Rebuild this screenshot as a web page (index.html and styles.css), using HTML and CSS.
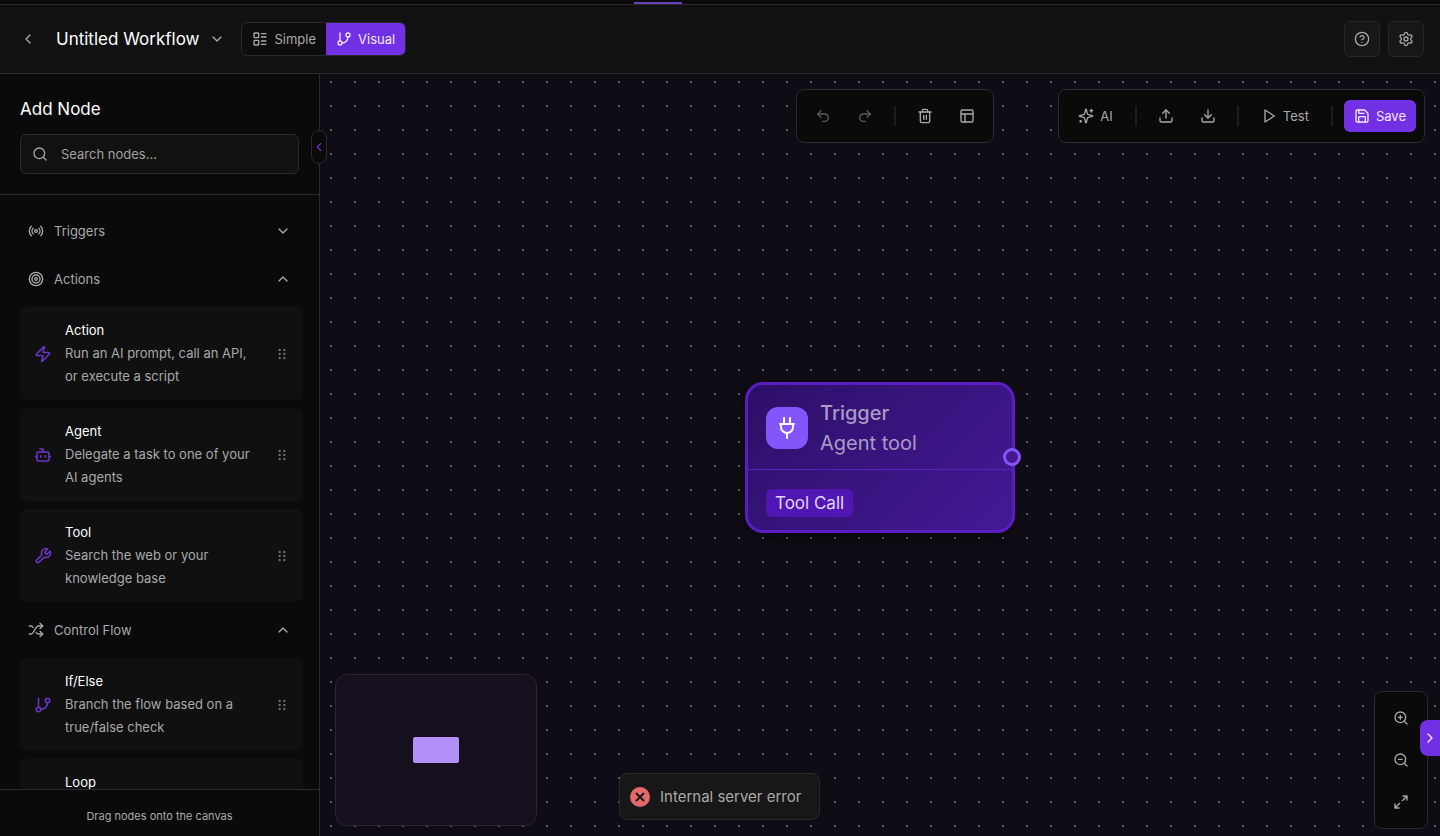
FILE: index.html
```html
<!DOCTYPE html>
<html lang="en">
<head>
  <meta charset="UTF-8" />
  <meta name="viewport" content="width=device-width, initial-scale=1.0"/>
  <title>Untitled Workflow</title>
  <link rel="stylesheet" href="styles.css">
</head>
<body>
  <div class="top-strip"><span class="tab-indicator"></span></div>

  <header class="header">
    <button class="back-btn" aria-label="Back">
      <svg class="icon" viewBox="0 0 24 24"><path d="m15 18-6-6 6-6"/></svg>
    </button>
    <button class="title-btn">
      <span class="title">Untitled Workflow</span>
      <svg class="icon" viewBox="0 0 24 24"><path d="m6 9 6 6 6-6"/></svg>
    </button>
    <div class="view-toggle">
      <button class="view-btn">
        <svg class="icon" viewBox="0 0 24 24"><rect width="7" height="7" x="3" y="3" rx="1"/><rect width="7" height="7" x="3" y="14" rx="1"/><path d="M14 4h7M14 9h7M14 15h7M14 20h7"/></svg>
        Simple
      </button>
      <button class="view-btn active">
        <svg class="icon" viewBox="0 0 24 24"><path d="M6 3v12"/><circle cx="18" cy="6" r="3"/><circle cx="6" cy="18" r="3"/><path d="M18 9a9 9 0 0 1-9 9"/></svg>
        Visual
      </button>
    </div>
    <div class="header-actions">
      <button class="square-btn" aria-label="Help">
        <svg class="icon" viewBox="0 0 24 24"><circle cx="12" cy="12" r="10"/><path d="M9.09 9a3 3 0 0 1 5.83 1c0 2-3 3-3 3"/><path d="M12 17h.01"/></svg>
      </button>
      <button class="square-btn" aria-label="Settings">
        <svg class="icon" viewBox="0 0 24 24"><path d="M9.671 4.136a2.34 2.34 0 0 1 4.659 0 2.34 2.34 0 0 0 3.319 1.915 2.34 2.34 0 0 1 2.33 4.033 2.34 2.34 0 0 0 0 3.831 2.34 2.34 0 0 1-2.33 4.033 2.34 2.34 0 0 0-3.319 1.915 2.34 2.34 0 0 1-4.659 0 2.34 2.34 0 0 0-3.32-1.915 2.34 2.34 0 0 1-2.33-4.033 2.34 2.34 0 0 0 0-3.831A2.34 2.34 0 0 1 6.35 6.051a2.34 2.34 0 0 0 3.319-1.915"/><circle cx="12" cy="12" r="3"/></svg>
      </button>
    </div>
  </header>

  <main class="main">
    <aside class="sidebar">
      <div class="sidebar-head">
        <h2>Add Node</h2>
        <label class="search">
          <svg class="icon" viewBox="0 0 24 24"><circle cx="11" cy="11" r="8"/><path d="m21 21-4.3-4.3"/></svg>
          <input type="text" placeholder="Search nodes..." aria-label="Search nodes" />
        </label>
      </div>

      <div class="node-list">
        <button class="category">
          <svg class="icon" viewBox="0 0 24 24"><path d="M4.9 19.1C1 15.2 1 8.8 4.9 4.9"/><path d="M7.8 16.2c-2.3-2.3-2.3-6.1 0-8.5"/><circle cx="12" cy="12" r="2"/><path d="M16.2 7.8c2.3 2.3 2.3 6.1 0 8.5"/><path d="M19.1 4.9C23 8.8 23 15.1 19.1 19"/></svg>
          <span>Triggers</span>
          <svg class="icon" viewBox="0 0 24 24"><path d="m6 9 6 6 6-6"/></svg>
        </button>
        <button class="category">
          <svg class="icon" viewBox="0 0 24 24"><circle cx="12" cy="12" r="10"/><circle cx="12" cy="12" r="6"/><circle cx="12" cy="12" r="2"/></svg>
          <span>Actions</span>
          <svg class="icon" viewBox="0 0 24 24"><path d="m18 15-6-6-6 6"/></svg>
        </button>

        <div class="card" draggable="true">
          <svg class="icon card-icon" viewBox="0 0 24 24"><path d="M4 14a1 1 0 0 1-.78-1.63l9.9-10.2a.5.5 0 0 1 .86.46l-1.92 6.02A1 1 0 0 0 13 10h7a1 1 0 0 1 .78 1.63l-9.9 10.2a.5.5 0 0 1-.86-.46l1.92-6.02A1 1 0 0 0 11 14z"/></svg>
          <div class="card-text">
            <h3>Action</h3>
            <p>Run an AI prompt, call an API, or execute a script</p>
          </div>
          <svg class="icon grip" viewBox="0 0 24 24"><circle cx="8" cy="5" r="1"/><circle cx="8" cy="12" r="1"/><circle cx="8" cy="19" r="1"/><circle cx="16" cy="5" r="1"/><circle cx="16" cy="12" r="1"/><circle cx="16" cy="19" r="1"/></svg>
        </div>
        <div class="card" draggable="true">
          <svg class="icon card-icon" viewBox="0 0 24 24"><path d="M12 8V4H8"/><rect width="16" height="12" x="4" y="8" rx="2"/><path d="M2 14h2M20 14h2M15 13v2M9 13v2"/></svg>
          <div class="card-text">
            <h3>Agent</h3>
            <p>Delegate a task to one of your AI agents</p>
          </div>
          <svg class="icon grip" viewBox="0 0 24 24"><circle cx="8" cy="5" r="1"/><circle cx="8" cy="12" r="1"/><circle cx="8" cy="19" r="1"/><circle cx="16" cy="5" r="1"/><circle cx="16" cy="12" r="1"/><circle cx="16" cy="19" r="1"/></svg>
        </div>
        <div class="card" draggable="true">
          <svg class="icon card-icon" viewBox="0 0 24 24"><path d="M14.7 6.3a1 1 0 0 0 0 1.4l1.6 1.6a1 1 0 0 0 1.4 0l3.77-3.77a6 6 0 0 1-7.94 7.94l-6.91 6.91a2.12 2.12 0 0 1-3-3l6.91-6.91a6 6 0 0 1 7.94-7.94l-3.76 3.76z"/></svg>
          <div class="card-text">
            <h3>Tool</h3>
            <p>Search the web or your knowledge base</p>
          </div>
          <svg class="icon grip" viewBox="0 0 24 24"><circle cx="8" cy="5" r="1"/><circle cx="8" cy="12" r="1"/><circle cx="8" cy="19" r="1"/><circle cx="16" cy="5" r="1"/><circle cx="16" cy="12" r="1"/><circle cx="16" cy="19" r="1"/></svg>
        </div>

        <button class="category">
          <svg class="icon" viewBox="0 0 24 24"><path d="m18 14 4 4-4 4"/><path d="m18 2 4 4-4 4"/><path d="M2 18h1.973a4 4 0 0 0 3.3-1.7l5.454-8.6a4 4 0 0 1 3.3-1.7H22"/><path d="M2 6h1.972a4 4 0 0 1 3.6 2.2"/><path d="M22 18h-6.041a4 4 0 0 1-3.3-1.8l-.359-.45"/></svg>
          <span>Control Flow</span>
          <svg class="icon" viewBox="0 0 24 24"><path d="m18 15-6-6-6 6"/></svg>
        </button>

        <div class="card" draggable="true">
          <svg class="icon card-icon" viewBox="0 0 24 24"><path d="M6 3v12"/><circle cx="18" cy="6" r="3"/><circle cx="6" cy="18" r="3"/><path d="M18 9a9 9 0 0 1-9 9"/></svg>
          <div class="card-text">
            <h3>If/Else</h3>
            <p>Branch the flow based on a true/false check</p>
          </div>
          <svg class="icon grip" viewBox="0 0 24 24"><circle cx="8" cy="5" r="1"/><circle cx="8" cy="12" r="1"/><circle cx="8" cy="19" r="1"/><circle cx="16" cy="5" r="1"/><circle cx="16" cy="12" r="1"/><circle cx="16" cy="19" r="1"/></svg>
        </div>
        <div class="card" draggable="true">
          <div class="card-text loop-text">
            <h3>Loop</h3>
          </div>
        </div>
      </div>

      <div class="sidebar-foot">Drag nodes onto the canvas</div>
      <button class="collapse-btn" aria-label="Collapse panel">
        <svg class="icon" viewBox="0 0 24 24"><path d="m15 18-6-6 6-6"/></svg>
      </button>
    </aside>

    <section class="canvas">
      <div class="toolbars">
        <div class="toolbar">
          <button class="tool-btn" aria-label="Undo" disabled>
            <svg class="icon" viewBox="0 0 24 24"><path d="M9 14 4 9l5-5"/><path d="M4 9h10.5a5.5 5.5 0 0 1 0 11H11"/></svg>
          </button>
          <button class="tool-btn" aria-label="Redo" disabled>
            <svg class="icon" viewBox="0 0 24 24"><path d="m15 14 5-5-5-5"/><path d="M20 9H9.5a5.5 5.5 0 0 0 0 11H13"/></svg>
          </button>
          <span class="divider"></span>
          <button class="tool-btn" aria-label="Delete">
            <svg class="icon" viewBox="0 0 24 24"><path d="M3 6h18"/><path d="M19 6v14a2 2 0 0 1-2 2H7a2 2 0 0 1-2-2V6"/><path d="M8 6V4a2 2 0 0 1 2-2h4a2 2 0 0 1 2 2v2"/><path d="M10 11v6M14 11v6"/></svg>
          </button>
          <button class="tool-btn" aria-label="Auto layout">
            <svg class="icon" viewBox="0 0 24 24"><rect width="18" height="18" x="3" y="3" rx="2"/><path d="M3 9h18M9 21V9"/></svg>
          </button>
        </div>

        <div class="toolbar">
          <button class="text-btn">
            <svg class="icon" viewBox="0 0 24 24"><path d="M9.9 15.5A2 2 0 0 0 8.5 14.1l-6.1-1.6a.5.5 0 0 1 0-1L8.5 9.9A2 2 0 0 0 9.9 8.5l1.6-6.1a.5.5 0 0 1 1 0l1.6 6.1a2 2 0 0 0 1.4 1.4l6.1 1.6a.5.5 0 0 1 0 1l-6.1 1.6a2 2 0 0 0-1.4 1.4l-1.6 6.1a.5.5 0 0 1-1 0z"/><path d="M20 2v4M22 4h-4"/><circle cx="4" cy="20" r="1"/></svg>
            AI
          </button>
          <span class="divider"></span>
          <button class="tool-btn" aria-label="Export">
            <svg class="icon" viewBox="0 0 24 24"><path d="M21 15v4a2 2 0 0 1-2 2H5a2 2 0 0 1-2-2v-4"/><path d="m17 8-5-5-5 5"/><path d="M12 3v12"/></svg>
          </button>
          <button class="tool-btn" aria-label="Import">
            <svg class="icon" viewBox="0 0 24 24"><path d="M21 15v4a2 2 0 0 1-2 2H5a2 2 0 0 1-2-2v-4"/><path d="m7 10 5 5 5-5"/><path d="M12 15V3"/></svg>
          </button>
          <span class="divider"></span>
          <button class="text-btn">
            <svg class="icon" viewBox="0 0 24 24"><path d="m6 3 14 9-14 9z"/></svg>
            Test
          </button>
          <span class="divider"></span>
          <button class="text-btn primary">
            <svg class="icon" viewBox="0 0 24 24"><path d="M15.2 3a2 2 0 0 1 1.4.6l3.8 3.8a2 2 0 0 1 .6 1.4V19a2 2 0 0 1-2 2H5a2 2 0 0 1-2-2V5a2 2 0 0 1 2-2z"/><path d="M17 21v-7a1 1 0 0 0-1-1H8a1 1 0 0 0-1 1v7"/><path d="M7 3v4a1 1 0 0 0 1 1h7"/></svg>
            Save
          </button>
        </div>
      </div>

      <div class="node">
        <div class="node-head">
          <span class="node-icon">
            <svg class="icon" viewBox="0 0 24 24"><path d="M12 22v-5"/><path d="M9 8V2"/><path d="M15 8V2"/><path d="M18 8v3a6 6 0 0 1-12 0V8"/><path d="M5 8h14"/></svg>
          </span>
          <div>
            <div class="node-title">Trigger</div>
            <div class="node-sub">Agent tool</div>
          </div>
        </div>
        <div class="node-body"><span class="badge">Tool Call</span></div>
        <span class="handle"></span>
      </div>

      <div class="minimap"><span class="minimap-node"></span></div>

      <div class="toast" role="alert">
        <svg class="toast-icon" viewBox="0 0 20 20"><circle cx="10" cy="10" r="10"/><path d="m6 6 8 8M14 6l-8 8"/></svg>
        Internal server error
      </div>

      <div class="zoom-bar">
        <button class="tool-btn" aria-label="Zoom in">
          <svg class="icon" viewBox="0 0 24 24"><circle cx="11" cy="11" r="8"/><path d="m21 21-4.3-4.3M11 8v6M8 11h6"/></svg>
        </button>
        <button class="tool-btn" aria-label="Zoom out">
          <svg class="icon" viewBox="0 0 24 24"><circle cx="11" cy="11" r="8"/><path d="m21 21-4.3-4.3M8 11h6"/></svg>
        </button>
        <button class="tool-btn" aria-label="Fit view">
          <svg class="icon" viewBox="0 0 24 24"><path d="M15 3h6v6M9 21H3v-6M21 3l-7 7M3 21l7-7"/></svg>
        </button>
      </div>
      <button class="panel-tab" aria-label="Open panel">
        <svg class="icon" viewBox="0 0 24 24"><path d="m9 18 6-6-6-6"/></svg>
      </button>
    </section>
  </main>
</body>
</html>
```
FILE: styles.css
```css
* {
  box-sizing: border-box;
}

body {
  margin: 0;
  height: 100vh;
  display: flex;
  flex-direction: column;
  overflow: hidden;
  background: #0a0a0a;
  color: #a9a9a9;
  font-family: Inter, "Liberation Sans", sans-serif;
  font-size: 13px;
}

h2, h3, p {
  margin: 0;
  font-weight: 400;
}

button {
  display: flex;
  align-items: center;
  justify-content: center;
  padding: 0;
  border: none;
  background: none;
  color: inherit;
  font: inherit;
  cursor: pointer;
}

.icon {
  width: 16px;
  height: 16px;
  flex-shrink: 0;
  fill: none;
  stroke: currentColor;
  stroke-width: 2;
  stroke-linecap: round;
  stroke-linejoin: round;
}

/* Header */
.top-strip {
  position: relative;
  height: 5px;
  flex-shrink: 0;
  border-bottom: 1px solid #2a2a2a;
}

.tab-indicator {
  position: absolute;
  left: 44%;
  bottom: 0;
  width: 48px;
  height: 2px;
  background: #6a3cc0;
}

.header {
  display: flex;
  align-items: center;
  flex-shrink: 0;
  height: 69px;
  padding: 0 16px;
  background: #111111;
  border-bottom: 1px solid #2a2a2a;
}

.back-btn {
  width: 24px;
  height: 32px;
}

.title-btn {
  gap: 10px;
  margin-left: 16px;
}

.title {
  color: #ffffff;
  font-size: 17px;
  line-height: 24px;
}

.view-toggle {
  display: flex;
  height: 34px;
  margin-left: 16px;
  border: 1px solid #2a2a2a;
  border-radius: 6px;
  background: #0d0d0d;
  overflow: hidden;
}

.view-btn {
  gap: 6px;
  padding: 0 10px;
}

.view-btn.active {
  background: #7230e4;
  color: #f3e8ff;
}

.header-actions {
  display: flex;
  gap: 8px;
  margin-left: auto;
}

.square-btn {
  width: 36px;
  height: 36px;
  border: 1px solid #262626;
  border-radius: 6px;
  background: #171717;
}

/* Sidebar */
.main {
  display: flex;
  flex: 1;
  min-height: 0;
}

.sidebar {
  position: relative;
  z-index: 1;
  display: flex;
  flex-direction: column;
  flex-shrink: 0;
  width: 320px;
  border-right: 1px solid #2a2a2a;
}

.sidebar-head {
  padding: 20px;
  border-bottom: 1px solid #2a2a2a;
}

.sidebar-head h2 {
  margin-bottom: 10px;
  color: #ffffff;
  font-size: 17px;
  line-height: 30px;
}

.search {
  display: flex;
  align-items: center;
  gap: 13px;
  height: 40px;
  padding: 0 11px;
  border: 1px solid #2a2a2a;
  border-radius: 6px;
  background: #111111;
}

.search input {
  flex: 1;
  min-width: 0;
  padding: 0;
  border: none;
  outline: none;
  background: none;
  color: #ffffff;
  font: inherit;
}

.search input::placeholder {
  color: #a0a0a0;
}

.node-list {
  display: flex;
  flex-direction: column;
  gap: 8px;
  flex: 1;
  min-height: 0;
  padding: 16px 16px 0 20px;
  overflow: hidden;
}

.category {
  flex-shrink: 0;
  gap: 10px;
  height: 40px;
  padding: 0 12px 0 8px;
}

.category span {
  flex: 1;
  text-align: left;
}

.card {
  display: flex;
  align-items: center;
  flex-shrink: 0;
  gap: 13px;
  padding: 12px 14px;
  border-radius: 6px;
  background: #101010;
  line-height: 23px;
  cursor: grab;
}

.card-icon {
  width: 18px;
  height: 18px;
  color: #6a35c9;
}

.card-text {
  flex: 1;
}

.card h3 {
  color: #ffffff;
  font-size: 13px;
}

.loop-text {
  padding-left: 31px;
}

.grip {
  width: 14px;
  height: 14px;
  color: #707070;
}

.sidebar-foot {
  flex-shrink: 0;
  padding: 16px 16px 10px;
  border-top: 1px solid #2a2a2a;
  font-size: 11px;
  line-height: 20px;
  text-align: center;
}

.collapse-btn {
  position: absolute;
  top: 56px;
  right: -8px;
  width: 16px;
  height: 34px;
  border: 1px solid #2a2a2a;
  border-radius: 8px;
  background: #0a0a0a;
  color: #6a35c9;
}

.collapse-btn .icon {
  width: 14px;
  height: 14px;
}

/* Canvas */
.canvas {
  position: relative;
  flex: 1;
  min-width: 0;
  background-color: #0f0c15;
  background-image: radial-gradient(circle, #5d5962 1px, transparent 1px);
  background-size: 24px 24px;
  background-position: -1px -4px;
}

.toolbars {
  position: absolute;
  top: 15px;
  right: 15px;
  display: flex;
  gap: 64px;
}

.toolbar,
.zoom-bar {
  display: flex;
  align-items: center;
  gap: 6px;
  padding: 8px;
  border: 1px solid #2a2a2a;
  border-radius: 8px;
  background: #0a0a0a;
}

.tool-btn {
  width: 36px;
  height: 36px;
}

.tool-btn:disabled {
  opacity: 0.5;
}

.text-btn {
  gap: 6px;
  height: 32px;
  padding: 0 11px;
}

.text-btn.primary {
  padding: 0 10px;
  border-radius: 6px;
  background: #7230e4;
  color: #f3e8ff;
}

.divider {
  width: 2px;
  height: 20px;
  margin: 0 5px;
  background: #1c1c1c;
}

.node {
  position: absolute;
  top: 308px;
  left: 425px;
  width: 270px;
  border: 3px solid #5b1cc2;
  border-radius: 18px;
  background: linear-gradient(135deg, #2c0f68, #451995);
  box-shadow: 0 4px 12px rgba(0, 0, 0, 0.4);
}

.node-head {
  display: flex;
  align-items: center;
  gap: 12px;
  padding: 13px 18px 11px;
  border-bottom: 1px solid #5a22bc;
  color: #ab9bc4;
  font-size: 20px;
  line-height: 30px;
}

.node-icon {
  display: flex;
  align-items: center;
  justify-content: center;
  width: 42px;
  height: 42px;
  border-radius: 12px;
  background: #8455fb;
  color: #ffffff;
}

.node-icon .icon {
  width: 24px;
  height: 24px;
}

.node-title {
  font-weight: 500;
}

.node-body {
  display: flex;
  padding: 19px 18px 13px;
}

.badge {
  padding: 0 9px;
  border-radius: 6px;
  background: #5016b4;
  color: #e5d5ff;
  font-size: 17px;
  line-height: 28px;
}

.handle {
  position: absolute;
  top: 63px;
  right: -9px;
  width: 18px;
  height: 18px;
  border: 3px solid #8455fb;
  border-radius: 50%;
  background: #431890;
}

.minimap {
  position: absolute;
  left: 15px;
  bottom: 10px;
  display: flex;
  align-items: center;
  justify-content: center;
  width: 202px;
  height: 152px;
  border: 1px solid #2b2730;
  border-radius: 12px;
  background: #160f1e;
}

.minimap-node {
  width: 46px;
  height: 26px;
  border-radius: 2px;
  background: #b490fa;
}

.toast {
  position: absolute;
  left: 299px;
  bottom: 16px;
  display: flex;
  align-items: center;
  gap: 10px;
  height: 47px;
  padding: 0 18px 0 10px;
  border: 1px solid #2a2a2a;
  border-radius: 8px;
  background: #171717;
  font-size: 15px;
}

.toast-icon {
  width: 20px;
  height: 20px;
  fill: #e5696b;
  stroke: #171717;
  stroke-width: 2;
}

.toast-icon circle {
  stroke: none;
}

.zoom-bar {
  position: absolute;
  right: 12px;
  bottom: 7px;
  flex-direction: column;
}

.panel-tab {
  position: absolute;
  right: 0;
  bottom: 80px;
  width: 20px;
  height: 36px;
  border-radius: 8px 0 0 8px;
  background: #7230e4;
  color: #f3e8ff;
}
```
